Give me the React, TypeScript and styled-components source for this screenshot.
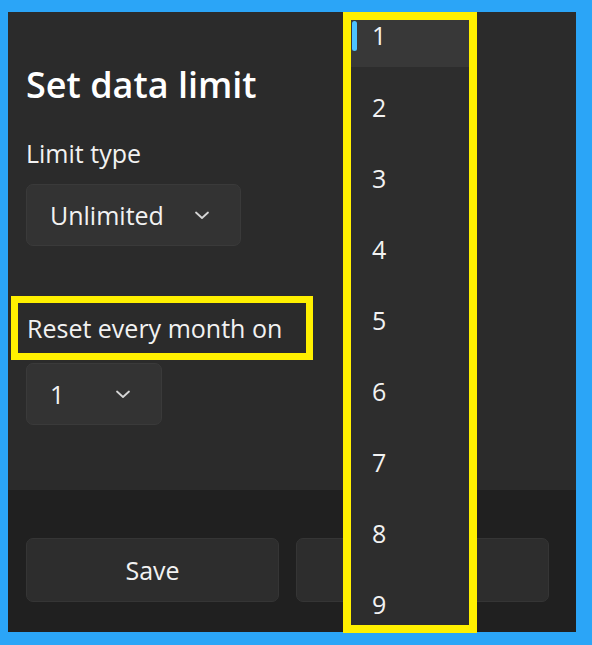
import React from 'react';
import styled, { createGlobalStyle } from 'styled-components';

const GlobalStyle = createGlobalStyle`
  html, body {
    margin: 0;
    padding: 0;
    background: #2ba5f7;
  }
  body {
    font-family: "Open Sans", "Noto Sans", sans-serif;
    color: #f2f2f2;
  }
`;

const days = [1, 2, 3, 4, 5, 6, 7, 8, 9];

const Chevron = () => (
  <svg width="16" height="9" viewBox="0 0 16 9" fill="none">
    <polyline points="2,1.5 8,7 14,1.5" stroke="#d6d6d6" strokeWidth="1.8" strokeLinecap="round" strokeLinejoin="round" />
  </svg>
);

const App = () => {
  return (
    <Page>
      <GlobalStyle />
      <Dialog>
        <Content>
          <Title>Set data limit</Title>
          <Label>Limit type</Label>
          <ComboBox width={215}>
            <span>Unlimited</span>
            <Chevron />
          </ComboBox>
          <MarkedLabel>Reset every month on</MarkedLabel>
          <ComboBox width={136}>
            <span>1</span>
            <Chevron />
          </ComboBox>
        </Content>
        <Footer>
          <Button>Save</Button>
          <Button>Cancel</Button>
        </Footer>
      </Dialog>

      <Popup>
        <List>
          {days.map((d) => (
            <Item key={d} selected={d === 1}>
              {d === 1 && <Accent />}
              {d}
            </Item>
          ))}
        </List>
      </Popup>
    </Page>
  );
};

export default App;

// Styled components
const Page = styled.div`
  position: relative;
  width: 592px;
  height: 645px;
  box-sizing: border-box;
  padding: 12px 16px 13px 8px;
  overflow: hidden;
`;

const Dialog = styled.div`
  display: flex;
  flex-direction: column;
  width: 568px;
  height: 620px;
  background-color: #2b2b2b;
`;

const Content = styled.div`
  display: flex;
  flex-direction: column;
  align-items: flex-start;
  height: 478px;
  box-sizing: border-box;
  padding: 48px 0 0 18px;
`;

const Title = styled.h1`
  margin: 0 0 26px;
  font-size: 36px;
  line-height: 50px;
  font-weight: 600;
  color: #ffffff;
`;

const Label = styled.div`
  margin: 0 0 14px;
  font-size: 25px;
  line-height: 34px;
`;

const MarkedLabel = styled.div`
  margin: 50px 0 3px -15px;
  border: 7px solid #fff000;
  padding: 8px 9px;
  width: 302px;
  box-sizing: border-box;
  font-size: 25px;
  line-height: 34px;
`;

const ComboBox = styled.div<{ width: number }>`
  display: flex;
  align-items: center;
  justify-content: space-between;
  width: ${(p) => p.width}px;
  height: 62px;
  box-sizing: border-box;
  padding: 0 30px 0 23px;
  background-color: #333333;
  border: 1px solid #3a3a3a;
  border-radius: 7px;
  font-size: 25px;
  line-height: 34px;
`;

const Footer = styled.div`
  display: flex;
  gap: 17px;
  height: 142px;
  box-sizing: border-box;
  padding: 48px 27px 32px 18px;
  background-color: #202020;
`;

const Button = styled.div`
  flex: 1;
  display: flex;
  align-items: center;
  justify-content: center;
  height: 62px;
  background-color: #2d2d2d;
  border: 1px solid #353535;
  border-radius: 7px;
  font-size: 25px;
  color: #f2f2f2;
`;

const Popup = styled.div`
  position: absolute;
  left: 343px;
  top: 12px;
  width: 134px;
  height: 621px;
  box-sizing: border-box;
  border: 8px solid #fff000;
  background-color: #2d2d2d;
  overflow: hidden;
`;

const List = styled.div`
  display: flex;
  flex-direction: column;
`;

const Item = styled.div<{ selected?: boolean }>`
  position: relative;
  flex: none;
  display: flex;
  align-items: ${(p) => (p.selected ? 'flex-start' : 'center')};
  height: ${(p) => (p.selected ? '47px' : '71px')};
  margin-bottom: ${(p) => (p.selected ? '4px' : '0')};
  box-sizing: border-box;
  padding-left: 21px;
  background-color: ${(p) => (p.selected ? '#383838' : 'transparent')};
  font-size: 25px;
  line-height: 30px;
  color: #f2f2f2;
`;

const Accent = styled.span`
  position: absolute;
  left: 1px;
  top: 1px;
  width: 5px;
  height: 30px;
  border-radius: 3px;
  background-color: #4cc2ff;
`;
